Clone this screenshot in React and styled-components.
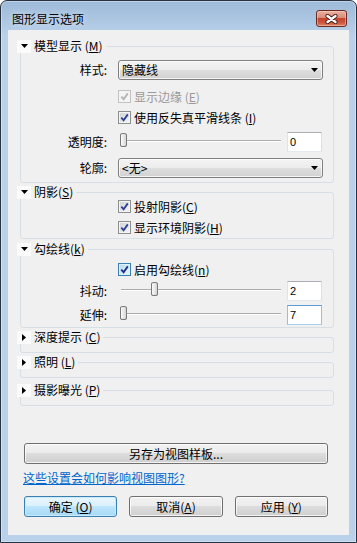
import React from "react";
import styled, { createGlobalStyle, css } from "styled-components";

const GlobalStyle = createGlobalStyle`
  html, body { margin: 0; padding: 0; background: #ffffff; }
  body {
    font-family: "Noto Sans CJK SC", "Liberation Sans", sans-serif;
    font-size: 12px;
    color: #000;
  }
  * { box-sizing: border-box; }
`;

const Window = styled.div`
  width: 357px;
  height: 543px;
  display: flex;
  flex-direction: column;
  border: 1px solid #26323f;
  border-radius: 7px 7px 0 0;
  background: linear-gradient(to bottom, #9dbad9 0px, #adc7e3 20px, #b9d1ea 34px, #b9d1ea 100%);
  box-shadow: inset 0 0 0 1px rgba(255, 255, 255, 0.35);
  overflow: hidden;
`;

const TitleBar = styled.div`
  height: 29px;
  flex: none;
  display: flex;
  align-items: flex-start;
  justify-content: space-between;
  padding: 9px 9px 0 11px;
`;

const TitleText = styled.div`
  margin-top: 2px;
  line-height: 14px;
  font-size: 12px;
  color: #000;
  text-shadow: 0 0 6px rgba(255, 255, 255, 0.7);
`;

const CloseButton = styled.div`
  width: 31px;
  height: 17px;
  border: 1px solid #6a2a21;
  border-radius: 3px;
  background: linear-gradient(to bottom, #eab0a2 0%, #da8c79 45%, #c4442f 50%, #c9543b 75%, #dc8466 100%);
  box-shadow: inset 0 0 0 1px rgba(255, 220, 210, 0.45);
  display: flex;
  align-items: center;
  justify-content: center;
`;

const Client = styled.div`
  flex: 1;
  margin: 0 7px 7px;
  background: #f0f0f0;
  display: flex;
  flex-direction: column;
`;

const Groups = styled.div`
  display: flex;
  flex-direction: column;
  padding: 10px 15px 0 12px;
`;

const Group = styled.fieldset`
  margin: ${(p) => p.$mt}px 0 0;
  padding: 0 10px ${(p) => p.$pb}px 0;
  border: 1px solid #d5dfe5;
  border-radius: 3px;
  min-width: 0;
`;

const Legend = styled.legend`
  padding: 0 3px 0 0;
  margin-left: -4px;
  height: 12px;
`;

const LegendInner = styled.span`
  display: flex;
  align-items: center;
  height: 12px;
  line-height: 12px;
  white-space: nowrap;
`;

const Toggle = styled.span`
  width: 14px;
  height: 13px;
  flex: none;
  margin-right: 3px;
  background: #fbfbfb;
  display: flex;
  align-items: center;
  justify-content: center;
`;

const Row = styled.div`
  display: grid;
  grid-template-columns: 86px 1fr;
  column-gap: 11px;
  align-items: center;
  height: ${(p) => p.$h}px;
  margin-top: ${(p) => p.$mt}px;
`;

const Label = styled.span`
  text-align: right;
  white-space: nowrap;
  line-height: 14px;
`;

const Mn = styled.u`
  text-decoration: underline;
  text-underline-offset: 1px;
`;

const SelectBox = styled.div`
  grid-column: 2;
  height: 20px;
  border: 1px solid #7f7f7f;
  border-radius: 3px;
  background: linear-gradient(to bottom, #f3f3f3 0%, #ececec 50%, #dedede 50%, #d1d1d1 100%);
  box-shadow: inset 0 0 0 1px rgba(255, 255, 255, 0.75);
  display: flex;
  align-items: center;
  justify-content: space-between;
  padding: 0 4px 0 3px;
  line-height: 14px;
`;

const CheckLine = styled.label`
  grid-column: 2;
  display: flex;
  align-items: center;
  gap: 3px;
  line-height: 14px;
  white-space: nowrap;
  color: ${(p) => (p.$disabled ? "#9a9a9a" : "#000")};
`;

const CheckBox = styled.span`
  width: 13px;
  height: 13px;
  flex: none;
  border: 1px solid #8e8f8f;
  background: linear-gradient(135deg, #cdd1d7 0%, #f6f6f6 100%);
  box-shadow: inset 0 0 0 1px #f4f4f4;
  display: flex;
  align-items: center;
  justify-content: center;
  ${(p) =>
    p.$disabled &&
    css`
      border-color: #c2c2c2;
      background: #f4f4f4;
    `}
  ${(p) =>
    p.$hot &&
    css`
      border-color: #3c7fb1;
      background: linear-gradient(135deg, #b6d9f0 0%, #eaf6fd 100%);
      box-shadow: inset 0 0 0 1px #def0fb;
    `}
`;

const SliderLine = styled.div`
  grid-column: 2;
  display: flex;
  align-items: center;
  gap: 6px;
  height: 100%;
`;

const SliderWrap = styled.div`
  position: relative;
  flex: 1;
  height: 100%;
  margin-left: 2px;
  padding-bottom: 3px;
  display: flex;
  align-items: center;
`;

const Track = styled.div`
  flex: 1;
  margin-left: 1px;
  height: 2px;
  border-top: 1px solid #adadad;
  border-bottom: 1px solid #ffffff;
`;

const Thumb = styled.div`
  position: absolute;
  top: 1px;
  width: 7px;
  height: 14px;
  border: 1px solid #7a7a7a;
  border-radius: 3px / 2px;
  background: linear-gradient(to right, #fbfbfb 0%, #e6e6e6 60%, #d4d4d4 100%);
`;

const NumBox = styled.div`
  width: 35px;
  height: 20px;
  flex: none;
  margin-right: 1px;
  background: #fff;
  border: 1px solid;
  border-color: #abadb3 #dbdfe6 #e3e9ef #e2e3ea;
  font-family: "Liberation Sans", "DejaVu Sans", sans-serif;
  font-size: 11px;
  line-height: 18px;
  padding-left: 2px;
  ${(p) =>
    p.$focused &&
    css`
      border-color: #5b9bd5 #8fc0e8 #a9d0ee #8fc0e8;
    `}
`;

const Footer = styled.div`
  margin-top: auto;
  display: flex;
  flex-direction: column;
  padding: 0 21px 18px 16px;
`;

const PushButton = styled.button`
  height: 21px;
  padding: 0;
  border: 1px solid #707070;
  border-radius: 3px;
  background: linear-gradient(to bottom, #f2f2f2 0%, #ebebeb 50%, #dddddd 50%, #cfcfcf 100%);
  box-shadow: inset 0 0 0 1px rgba(255, 255, 255, 0.75);
  font-family: "Noto Sans CJK SC", "Liberation Sans", sans-serif;
  font-size: 12px;
  line-height: 14px;
  color: #000;
  ${(p) =>
    p.$default &&
    css`
      border-color: #3c7fb1;
      background: linear-gradient(to bottom, #eaf6fd 0%, #d9f0fc 50%, #bee6fd 50%, #a7d9f5 100%);
      box-shadow: inset 0 0 0 1px #c9eafb;
    `}
`;

const HelpLink = styled.a`
  align-self: flex-start;
  margin: 7px 0 0 -1px;
  line-height: 14px;
  color: #0066cc;
  text-decoration: underline;
  text-underline-offset: 1px;
`;

const ButtonRow = styled.div`
  margin-top: 11px;
  display: grid;
  grid-template-columns: repeat(3, 1fr);
  column-gap: 12px;
`;

const DownArrow = () => (
  <svg width="7" height="4" viewBox="0 0 7 4">
    <polygon points="0,0 7,0 3.5,4" fill="#000" />
  </svg>
);

const RightArrow = () => (
  <svg width="4" height="7" viewBox="0 0 4 7">
    <polygon points="0,0 4,3.5 0,7" fill="#000" />
  </svg>
);

const CloseGlyph = () => (
  <svg width="13" height="10" viewBox="0 0 13 10">
    <path d="M2.5 2 L10.5 8 M10.5 2 L2.5 8" stroke="#4a1c15" strokeWidth="4.2" strokeLinecap="round" />
    <path d="M2.5 2 L10.5 8 M10.5 2 L2.5 8" stroke="#ffffff" strokeWidth="2.4" strokeLinecap="round" />
  </svg>
);

function Check({ children, disabled, hot }) {
  const color = disabled ? "#b3b3b3" : hot ? "#1b2f85" : "#2b418f";
  return (
    <CheckLine $disabled={disabled}>
      <CheckBox $disabled={disabled} $hot={hot}>
        <svg width="9" height="9" viewBox="0 0 9 9">
          <path d="M1.3 4.6 L3.6 7.2 L7.8 1.4" stroke={color} strokeWidth="1.8" fill="none" />
        </svg>
      </CheckBox>
      <span>{children}</span>
    </CheckLine>
  );
}

function Slider({ value, min, max, focused }) {
  const frac = (value - min) / (max - min);
  return (
    <SliderLine>
      <SliderWrap>
        <Track />
        <Thumb style={{ left: `calc(${frac} * (100% - 7px))` }} />
      </SliderWrap>
      <NumBox $focused={focused}>{value}</NumBox>
    </SliderLine>
  );
}

function GroupBox({ title, open, mt, pb, children }) {
  return (
    <Group $mt={mt} $pb={pb}>
      <Legend>
        <LegendInner>
          <Toggle>{open ? <DownArrow /> : <RightArrow />}</Toggle>
          {title}
        </LegendInner>
      </Legend>
      {children}
    </Group>
  );
}

export default function App() {
  return (
    <>
      <GlobalStyle />
      <Window>
        <TitleBar>
          <TitleText>图形显示选项</TitleText>
          <CloseButton>
            <CloseGlyph />
          </CloseButton>
        </TitleBar>
        <Client>
          <Groups>
            <GroupBox open mt={0} pb={4} title={<>模型显示 (<Mn>M</Mn>)</>}>
              <Row $h={20} $mt={8}>
                <Label>样式:</Label>
                <SelectBox>
                  <span>隐藏线</span>
                  <DownArrow />
                </SelectBox>
              </Row>
              <Row $h={17} $mt={8}>
                <Check disabled>显示边缘 (<Mn>E</Mn>)</Check>
              </Row>
              <Row $h={17} $mt={4}>
                <Check>使用反失真平滑线条 (<Mn>I</Mn>)</Check>
              </Row>
              <Row $h={20} $mt={6}>
                <Label>透明度:</Label>
                <Slider value={0} min={0} max={100} />
              </Row>
              <Row $h={20} $mt={6}>
                <Label>轮廓:</Label>
                <SelectBox>
                  <span>{"<无>"}</span>
                  <DownArrow />
                </SelectBox>
              </Row>
            </GroupBox>

            <GroupBox open mt={3} pb={2} title={<>阴影(<Mn>S</Mn>)</>}>
              <Row $h={17} $mt={0}>
                <Check>投射阴影(<Mn>C</Mn>)</Check>
              </Row>
              <Row $h={17} $mt={4}>
                <Check>显示环境阴影(<Mn>H</Mn>)</Check>
              </Row>
            </GroupBox>

            <GroupBox open mt={4} pb={2} title={<>勾绘线(<Mn>k</Mn>)</>}>
              <Row $h={17} $mt={6}>
                <Check hot>启用勾绘线(<Mn>n</Mn>)</Check>
              </Row>
              <Row $h={20} $mt={3}>
                <Label>抖动:</Label>
                <Slider value={2} min={0} max={10} />
              </Row>
              <Row $h={20} $mt={4}>
                <Label>延伸:</Label>
                <Slider value={7} min={7} max={100} focused />
              </Row>
            </GroupBox>

            <GroupBox mt={3} pb={9} title={<>深度提示 (<Mn>C</Mn>)</>} />
            <GroupBox mt={3} pb={9} title={<>照明 (<Mn>L</Mn>)</>} />
            <GroupBox mt={6} pb={9} title={<>摄影曝光 (<Mn>P</Mn>)</>} />
          </Groups>

          <Footer>
            <PushButton>另存为视图样板...</PushButton>
            <HelpLink href="#">这些设置会如何影响视图图形?</HelpLink>
            <ButtonRow>
              <PushButton $default>确定 (<Mn>O</Mn>)</PushButton>
              <PushButton>取消(<Mn>A</Mn>)</PushButton>
              <PushButton>应用 (<Mn>Y</Mn>)</PushButton>
            </ButtonRow>
          </Footer>
        </Client>
      </Window>
    </>
  );
}
